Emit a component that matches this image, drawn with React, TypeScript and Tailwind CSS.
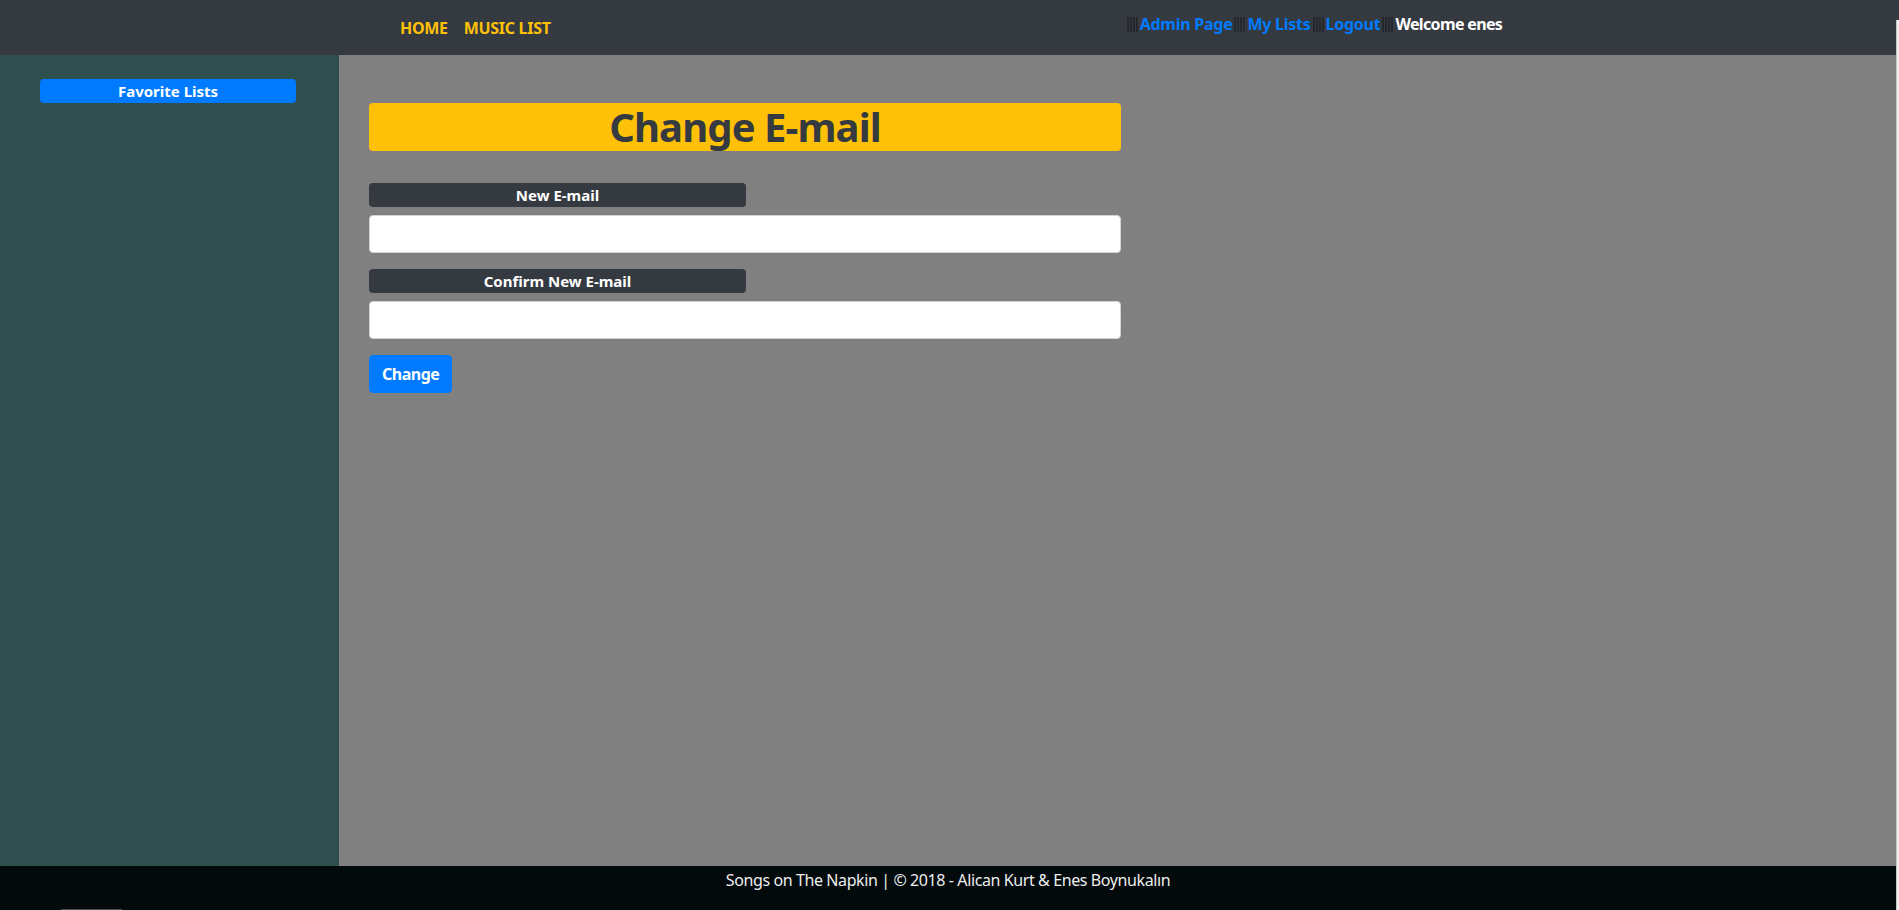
import React from "react";

const font = { fontFamily: '"Noto Sans", "Open Sans", Arial, sans-serif' };

function Sep() {
  return (
    <span className="flex items-center gap-[1px] h-[15px] mx-[2px]">
      <span className="w-[2px] h-full bg-[#25292d]" />
      <span className="w-[2px] h-full bg-[#25292d]" />
      <span className="w-[2px] h-full bg-[#25292d]" />
      <span className="w-[2px] h-full bg-[#25292d]" />
    </span>
  );
}

export default function App() {
  return (
    <div
      className="relative w-[1899px] h-[910px] flex flex-col overflow-hidden"
      style={font}
    >
      <header className="h-[55px] bg-[#343a40] flex items-start shrink-0">
        <nav className="flex gap-[16px] pl-[400px] pt-[16px] text-[16px] leading-[24px] font-bold tracking-[-0.3px] text-[#ffc107]">
          <span>HOME</span>
          <span>MUSIC LIST</span>
        </nav>
        <nav className="flex items-center ml-[574px] pt-[12px] text-[16px] leading-[24px] font-bold tracking-[-0.25px]">
          <Sep />
          <span className="text-[#007bff]">Admin Page</span>
          <Sep />
          <span className="text-[#007bff]">My Lists</span>
          <Sep />
          <span className="text-[#007bff]">Logout</span>
          <Sep />
          <span className="text-white tracking-[-0.65px]">Welcome enes</span>
        </nav>
      </header>

      <div className="flex flex-1 w-[1896px]">
        <aside className="w-[339px] bg-[#2f4f4f] pt-[24px] pl-[40px] shrink-0">
          <div className="w-[256px] h-[24px] rounded-[4px] bg-[#007bff] text-white text-[15px] leading-[24px] font-bold text-center">
            Favorite Lists
          </div>
        </aside>
        <main className="flex-1 bg-[#808080] pl-[30px] pt-[48px]">
          <div className="w-[752px] flex flex-col">
            <h1 className="h-[48px] rounded-[4px] bg-[#ffc107] text-[#343a40] text-[40px] leading-[48px] font-bold tracking-[-0.9px] text-center">
              Change E-mail
            </h1>
            <div className="mt-[32px] w-[377px] h-[24px] rounded-[4px] bg-[#343a40] text-white text-[15px] leading-[24px] font-bold text-center">
              New E-mail
            </div>
            <input
              type="email"
              className="mt-[8px] h-[38px] w-full rounded-[4px] border border-[#ced4da] bg-white px-3 outline-none"
            />
            <div className="mt-[16px] w-[377px] h-[24px] rounded-[4px] bg-[#343a40] text-white text-[15px] leading-[24px] font-bold text-center">
              Confirm New E-mail
            </div>
            <input
              type="email"
              className="mt-[8px] h-[38px] w-full rounded-[4px] border border-[#ced4da] bg-white px-3 outline-none"
            />
            <div className="mt-[16px]">
              <button className="h-[38px] px-[12px] rounded-[4px] border border-[#007bff] bg-[#007bff] text-white text-[16px] leading-[24px] font-bold tracking-[-0.5px]">
                Change
              </button>
            </div>
          </div>
        </main>
      </div>

      <footer className="h-[44px] w-[1896px] bg-[#020a0c] text-[#eeeeee] text-[16px] leading-[24px] tracking-[-0.4px] text-center pt-[2px] shrink-0">
        Songs on The Napkin | © 2018 - Alican Kurt &amp; Enes Boynukalın
      </footer>

      <div className="absolute right-0 top-[20px] bottom-0 w-[3px] flex">
        <div className="w-[1px] h-full bg-[#c4c4c4]" />
        <div className="flex-1 h-full bg-[#f0f0f0]" />
      </div>
      <div className="absolute left-[61px] bottom-0 w-[61px] h-[1px] bg-[#4b4b4b]" />
    </div>
  );
}
